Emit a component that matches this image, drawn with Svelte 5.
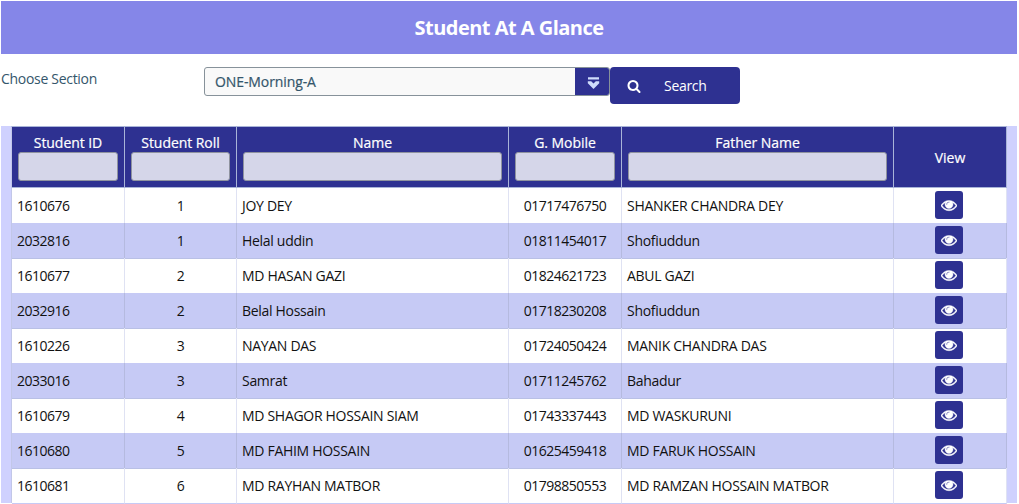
<script>
  const columns = ['Student ID', 'Student Roll', 'Name', 'G. Mobile', 'Father Name'];
  const students = [
    ['1610676', '1', 'JOY DEY', '01717476750', 'SHANKER CHANDRA DEY'],
    ['2032816', '1', 'Helal uddin', '01811454017', 'Shofiuddun'],
    ['1610677', '2', 'MD HASAN GAZI', '01824621723', 'ABUL GAZI'],
    ['2032916', '2', 'Belal Hossain', '01718230208', 'Shofiuddun'],
    ['1610226', '3', 'NAYAN DAS', '01724050424', 'MANIK CHANDRA DAS'],
    ['2033016', '3', 'Samrat', '01711245762', 'Bahadur'],
    ['1610679', '4', 'MD SHAGOR HOSSAIN SIAM', '01743337443', 'MD WASKURUNI'],
    ['1610680', '5', 'MD FAHIM HOSSAIN', '01625459418', 'MD FARUK HOSSAIN'],
    ['1610681', '6', 'MD RAYHAN MATBOR', '01798850553', 'MD RAMZAN HOSSAIN MATBOR']
  ];
</script>

<main class="page">
  <h1>Student At A Glance</h1>

  <div class="toolbar">
    <span class="label">Choose Section</span>
    <div class="select">
      <span class="value">ONE-Morning-A</span>
      <span class="arrow">
        <svg width="13" height="12" viewBox="0 0 13 12">
          <path d="M1 0.2h11v2.3H1zM0.8 4.2h3.4L6.5 6.5l2.3-2.3h3.4v2L6.5 11.9 0.8 6.2z" fill="#cfdcfb" />
        </svg>
      </span>
    </div>
    <button class="search">
      <svg width="14" height="14" viewBox="0 0 1792 1792">
        <path fill="#fff" d="M1216 832q0-185-131.5-316.5t-316.5-131.5-316.5 131.5-131.5 316.5 131.5 316.5 316.5 131.5 316.5-131.5 131.5-316.5zm512 832q0 52-38 90t-90 38q-54 0-90-38l-343-342q-179 124-399 124-143 0-273.5-55.5t-225-150-150-225-55.5-273.5 55.5-273.5 150-225 225-150 273.5-55.5 273.5 55.5 225 150 150 225 55.5 273.5q0 220-124 399l343 343q37 37 37 90z" />
      </svg>
      <span>Search</span>
    </button>
  </div>

  <div class="panel">
    <div class="table">
      <div class="row head">
        {#each columns as column}
          <div class="cell"><span>{column}</span><input type="text" aria-label={column} /></div>
        {/each}
        <div class="cell view">View</div>
      </div>
      {#each students as student, i}
        <div class="row" class:even={i % 2 === 1}>
          {#each student as value, c}
            <div class="cell" class:center={c === 1 || c === 3} class:number={c === 0 || c === 3}>{value}</div>
          {/each}
          <div class="cell center">
            <button class="eye" aria-label="View">
              <svg width="16" height="16" viewBox="0 0 1792 1792">
                <path fill="#fff" stroke="#fff" stroke-width="45" d="M1664 960q-152-236-381-353 61 104 61 225 0 185-131.5 316.5t-316.5 131.5-316.5-131.5-131.5-316.5q0-121 61-225-229 117-381 353 133 205 333.5 326.5t434.5 121.5 434.5-121.5 333.5-326.5zm-720-384q0-20-14-34t-34-14q-125 0-214.5 89.5t-89.5 214.5q0 20 14 34t34 14 34-14 14-34q0-86 61-147t147-61q20 0 34-14t14-34zm848 384q0 34-20 69-140 230-376.5 368.5t-499.5 138.5-499.5-139-376.5-368q-20-35-20-69t20-69q140-229 376.5-368t499.5-139 499.5 139 376.5 368q20 35 20 69z" />
              </svg>
            </button>
          </div>
        </div>
      {/each}
    </div>
  </div>
</main>

<style>
  :global(body) { background: #fff; overflow: hidden; }
  * { box-sizing: border-box; }
  .page {
    height: 504px;
    padding: 1px 2px 0 1px;
    overflow: hidden;
    font: 14px/20px "Open Sans", sans-serif;
    letter-spacing: -0.3px;
    color: #111;
  }
  h1 {
    height: 53px;
    margin: 0;
    background: #8586e8;
    color: #fff;
    font-size: 20px;
    line-height: 53px;
    font-weight: 700;
    letter-spacing: -0.52px;
    text-align: center;
  }
  .toolbar { display: flex; align-items: flex-start; height: 72px; padding-top: 13px; }
  .label { width: 203px; padding-top: 2px; color: #34566b; }
  .select {
    display: flex;
    width: 406px;
    height: 29px;
    overflow: hidden;
    border: 1px solid #87929a;
    border-radius: 3px;
    background: #f9f9f9;
  }
  .value {
    flex: 1;
    padding-left: 10px;
    line-height: 28px;
    font-weight: 500;
    letter-spacing: -0.1px;
    color: #34566b;
    -webkit-text-stroke: 0.2px #34566b;
  }
  .arrow { display: flex; width: 34px; padding: 9px 0 0 12px; background: #2e3191; }
  button { border: 0; background: #2e3191; color: #fff; font: inherit; letter-spacing: inherit; }
  .search {
    display: flex;
    align-items: center;
    gap: 23px;
    width: 130px;
    height: 37px;
    padding: 0 0 0 17px;
    border-radius: 4px;
  }
  .panel { padding: 0 10px; background: #cfd1fe; }
  .table { border-left: 1px solid #c2c7e8; border-top: 1px solid #a9b4d8; }
  .row {
    display: grid;
    grid-template-columns: 113px 112px 272px 113px 272px 1fr;
    height: 35px;
    background: #fff;
  }
  .even { background: #c6caf5; }
  .cell {
    padding: 0 5px;
    border-right: 1px solid #dfe2f3;
    border-bottom: 1px solid #b9c0e5;
    line-height: 35px;
    white-space: nowrap;
  }
  .row:not(.even):not(.head) .cell { border-bottom-color: #c6caf5; }
  .even .cell { border-right-color: #b5badf; }
  .center { text-align: center; }
  .number { letter-spacing: -0.5px; }
  .head { height: 61px; background: #2e3191; color: #fff; }
  .head .cell {
    display: flex;
    flex-direction: column;
    padding: 6px 6px 0;
    border-color: #a9b4d8;
    line-height: 19px;
    font-weight: 500;
    letter-spacing: -0.05px;
    text-align: center;
    -webkit-text-stroke: 0.2px #fff;
  }
  .head .view { justify-content: center; padding: 1px 0 0; }
  input {
    width: 100%;
    height: 29px;
    border: 1px solid #8f939f;
    border-radius: 3px;
    background: #d5d6e9;
  }
  .eye {
    display: flex;
    align-items: center;
    justify-content: center;
    width: 28px;
    height: 28px;
    margin: 3px 0 0 36px;
    padding: 0;
    border-radius: 3px;
  }
</style>
